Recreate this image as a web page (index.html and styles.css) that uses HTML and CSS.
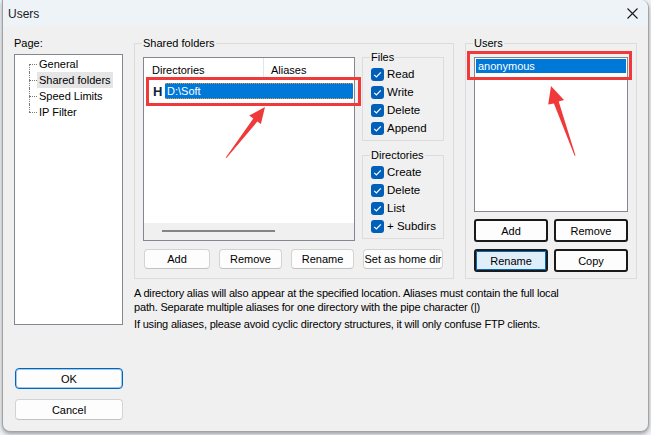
FILE: index.html
```html
<!DOCTYPE html>
<html>
<head>
<meta charset="utf-8">
<link rel="stylesheet" href="styles.css">
</head>
<body>
<div class="window">
  <div class="titlebar">
    <span class="title">Users</span>
    <svg class="close" width="11" height="11" viewBox="0 0 11 11"><path d="M0.5 0.5 L10.5 10.5 M10.5 0.5 L0.5 10.5" stroke="#1a1a1a" stroke-width="1.1" fill="none"/></svg>
  </div>
  <div class="client">
    <div class="left">
      <div class="page-label">Page:</div>
      <div class="tree">
        <div class="node first"><span class="twig"><i></i><i></i></span><span class="node-text">General</span></div>
        <div class="node"><span class="twig"><i></i><i></i></span><span class="node-text selected">Shared folders</span></div>
        <div class="node"><span class="twig"><i></i><i></i></span><span class="node-text">Speed Limits</span></div>
        <div class="node last"><span class="twig"><i></i><i></i></span><span class="node-text">IP Filter</span></div>
      </div>
      <div class="dlg-buttons">
        <button class="btn btn-ok">OK</button>
        <button class="btn btn-cancel">Cancel</button>
      </div>
    </div>
    <div class="main">
      <div class="groups">
        <fieldset class="group shared">
          <legend>Shared folders</legend>
          <div class="shared-body">
            <div class="listview">
              <div class="lv-header">
                <div class="lv-col col-dir">Directories</div>
                <div class="lv-col col-alias">Aliases</div>
              </div>
              <div class="lv-row"><span class="home-mark">H</span><span class="lv-sel">D:\Soft</span></div>
              <div class="lv-fill"></div>
              <div class="lv-hscroll"><div class="lv-thumb"></div></div>
            </div>
            <div class="perm-col">
              <fieldset class="subgroup files">
                <legend>Files</legend>
                <div class="check"><svg class="cb" width="13" height="13" viewBox="0 0 13 13"><rect x="0" y="0" width="13" height="13" rx="3" fill="#005fb8"/><path d="M3.2 6.9 L5.4 9 L9.8 4.3" stroke="#fff" stroke-width="1.2" fill="none"/></svg><span>Read</span></div>
                <div class="check"><svg class="cb" width="13" height="13" viewBox="0 0 13 13"><rect x="0" y="0" width="13" height="13" rx="3" fill="#005fb8"/><path d="M3.2 6.9 L5.4 9 L9.8 4.3" stroke="#fff" stroke-width="1.2" fill="none"/></svg><span>Write</span></div>
                <div class="check"><svg class="cb" width="13" height="13" viewBox="0 0 13 13"><rect x="0" y="0" width="13" height="13" rx="3" fill="#005fb8"/><path d="M3.2 6.9 L5.4 9 L9.8 4.3" stroke="#fff" stroke-width="1.2" fill="none"/></svg><span>Delete</span></div>
                <div class="check"><svg class="cb" width="13" height="13" viewBox="0 0 13 13"><rect x="0" y="0" width="13" height="13" rx="3" fill="#005fb8"/><path d="M3.2 6.9 L5.4 9 L9.8 4.3" stroke="#fff" stroke-width="1.2" fill="none"/></svg><span>Append</span></div>
              </fieldset>
              <fieldset class="subgroup dirs">
                <legend>Directories</legend>
                <div class="check"><svg class="cb" width="13" height="13" viewBox="0 0 13 13"><rect x="0" y="0" width="13" height="13" rx="3" fill="#005fb8"/><path d="M3.2 6.9 L5.4 9 L9.8 4.3" stroke="#fff" stroke-width="1.2" fill="none"/></svg><span>Create</span></div>
                <div class="check"><svg class="cb" width="13" height="13" viewBox="0 0 13 13"><rect x="0" y="0" width="13" height="13" rx="3" fill="#005fb8"/><path d="M3.2 6.9 L5.4 9 L9.8 4.3" stroke="#fff" stroke-width="1.2" fill="none"/></svg><span>Delete</span></div>
                <div class="check"><svg class="cb" width="13" height="13" viewBox="0 0 13 13"><rect x="0" y="0" width="13" height="13" rx="3" fill="#005fb8"/><path d="M3.2 6.9 L5.4 9 L9.8 4.3" stroke="#fff" stroke-width="1.2" fill="none"/></svg><span>List</span></div>
                <div class="check"><svg class="cb" width="13" height="13" viewBox="0 0 13 13"><rect x="0" y="0" width="13" height="13" rx="3" fill="#005fb8"/><path d="M3.2 6.9 L5.4 9 L9.8 4.3" stroke="#fff" stroke-width="1.2" fill="none"/></svg><span>+ Subdirs</span></div>
              </fieldset>
            </div>
          </div>
          <div class="shared-buttons">
            <button class="btn b-add">Add</button>
            <button class="btn b-remove">Remove</button>
            <button class="btn b-rename">Rename</button>
            <button class="btn b-home">Set as home dir</button>
          </div>
        </fieldset>
        <fieldset class="group users">
          <legend>Users</legend>
          <div class="listbox">
            <div class="lb-item">anonymous</div>
          </div>
          <div class="user-buttons">
            <button class="btn-dark">Add</button>
            <button class="btn-dark">Remove</button>
            <button class="btn-dark focused">Rename</button>
            <button class="btn-dark">Copy</button>
          </div>
        </fieldset>
      </div>
      <div class="help">
        <p>A directory alias will also appear at the specified location. Aliases must contain the full local<br>path. Separate multiple aliases for one directory with the pipe character (|)</p>
        <p>If using aliases, please avoid cyclic directory structures, it will only confuse FTP clients.</p>
      </div>
    </div>
  </div>
</div>
<svg class="annotations" width="651" height="435" viewBox="0 0 651 435">
  <rect x="147.5" y="78.5" width="212" height="26" fill="none" stroke="#f03a3a" stroke-width="3"/>
  <rect x="468.5" y="52.5" width="162" height="26" fill="none" stroke="#f03a3a" stroke-width="3"/>
  <polygon points="265,107 260.9,124 257.3,121.6 226.5,158 225.8,157.4 253.3,118.4 249.2,115.6" fill="#f03a3a"/>
  <polygon points="551,86 564,100 558.7,101.6 575.5,155.5 574.6,155.7 553.9,103.4 548.2,104.6" fill="#f03a3a"/>
</svg>
</body>
</html>
```
FILE: styles.css
```css
* { box-sizing: border-box; }
html, body {
  margin: 0;
  padding: 0;
}
body {
  width: 651px;
  height: 435px;
  overflow: hidden;
  background: #eef2f6;
  font-family: "Liberation Sans", Arial, sans-serif;
  font-size: 11px;
  color: #000;
  position: relative;
}
.window {
  margin-left: 2px;
  width: 647px;
  height: 432px;
  border: 1px solid #a3a3a3;
  border-top: none;
  border-radius: 0 8px 8px 8px;
  background: #f0f0f0;
  box-shadow: 0 2px 4px rgba(0,0,0,0.35);
  display: flex;
  flex-direction: column;
  overflow: hidden;
}
.titlebar {
  height: 26px;
  flex: none;
  background: #eef3f8;
  display: flex;
  align-items: center;
  justify-content: space-between;
  padding: 0 10px 0 5px;
}
.title {
  font-family: "Liberation Sans", Arial, sans-serif;
  font-size: 12px;
  color: #1a1a1a;
  padding-top: 1px;
}
.close { display: block; margin-top: 1px; }
.client {
  flex: 1;
  display: flex;
  padding: 10px 0 0 11px;
  column-gap: 11px;
}
.left {
  width: 109px;
  display: flex;
  flex-direction: column;
}
.page-label { line-height: 14px; }
.tree {
  margin-top: 4px;
  height: 271px;
  background: #fff;
  border: 1px solid #828790;
  padding: 1px 0 0 14px;
}
.node {
  display: flex;
  height: 16px;
  align-items: center;
}
.twig {
  width: 8px;
  height: 16px;
  display: flex;
  flex-direction: column;
}
.twig i {
  display: block;
  height: 8px;
  border-left: 1px dotted #7a7a7a;
}
.twig i:last-child {
  border-top: 1px dotted #7a7a7a;
}
.node.first .twig i:first-child { border-left: none; }
.node.last .twig i:last-child { border-left: none; }
.node-text {
  padding: 0 2px;
  line-height: 16px;
  height: 16px;
}
.node-text.selected { background: #e5e5e5; }
.dlg-buttons {
  margin-top: 43px;
  display: flex;
  flex-direction: column;
  row-gap: 10px;
  margin-left: 1px;
}
.btn {
  font-family: "Liberation Sans", Arial, sans-serif;
  font-size: 11px;
  color: #000;
  background: #fdfdfd;
  border: 1px solid #d3d3d3;
  border-bottom-color: #c2c2c2;
  border-radius: 4px;
  padding: 0;
  margin: 0;
  height: 21px;
}
.btn-ok {
  border: 1px solid #0067c0;
  box-shadow: inset 0 0 0 1px rgba(0,103,192,0.35);
}
.main {
  width: 503px;
  display: flex;
  flex-direction: column;
}
.groups {
  display: flex;
  column-gap: 11px;
}
fieldset { margin: 0; min-width: 0; }
legend {
  padding: 0 1px;
  margin-left: -1px;
  line-height: 14px;
}
.group {
  border: 1px solid #dcdcdc;
  padding: 0 8px 9px 8px;
}
.shared { width: 320px; }
.users { width: 172px; padding-bottom: 6px; }
.shared-body {
  display: grid;
  grid-template-columns: 212px 82px;
  column-gap: 7px;
  align-items: start;
}
.listview {
  margin-top: 7px;
  height: 184px;
  background: #fff;
  border: 1px solid #828790;
  display: flex;
  flex-direction: column;
}
.lv-header {
  display: flex;
  height: 24px;
}
.lv-col {
  line-height: 22px;
  padding-top: 1px;
}
.col-dir {
  width: 120px;
  padding-left: 8px;
  border-right: 1px solid #e5e5e5;
  height: 20px;
}
.col-alias { padding-left: 7px; }
.lv-row {
  display: flex;
  align-items: center;
  height: 18px;
  padding-left: 9px;
  padding-right: 1px;
}
.home-mark {
  font-weight: bold;
  font-size: 13px;
  color: #10243c;
  width: 12px;
}
.lv-sel {
  flex: 1;
  height: 16px;
  line-height: 14px;
  background: #0078d7;
  color: #fff;
  padding-left: 2px;
  border: 1px dotted #e49a3a;
  border-left-style: none;
  border-right-style: none;
}
.lv-fill { flex: 1; }
.lv-hscroll {
  height: 17px;
  background: #f0f0f0;
  padding: 7px 0 0 18px;
}
.lv-thumb {
  width: 113px;
  height: 2px;
  background: #858585;
}
.subgroup {
  width: 82px;
  border: 1px solid #dcdcdc;
  padding: 1px 0 3px 8px;
}
.dirs { margin-top: 7px; }
.check {
  display: flex;
  align-items: center;
  column-gap: 3px;
  height: 18px;
  font-size: 11.5px;
}
.cb { display: block; flex: none; }
.shared-buttons {
  margin-top: 8px;
  display: grid;
  grid-template-columns: 66px 63px 63px 80px;
  column-gap: 9px;
  padding-left: 1px;
}
.shared-buttons .btn { height: 20px; }
.listbox {
  margin-top: 7px;
  height: 155px;
  background: #fff;
  border: 1px solid #828790;
  padding: 1px;
}
.lb-item {
  height: 14px;
  line-height: 14px;
  background: #0078d7;
  color: #fff;
  padding-left: 2px;
  font-size: 11px;
}
.user-buttons {
  margin-top: 7px;
  display: grid;
  grid-template-columns: 74px 74px;
  column-gap: 6px;
  row-gap: 7px;
}
.btn-dark {
  height: 23px;
  font-family: "Liberation Sans", Arial, sans-serif;
  font-size: 11px;
  color: #000;
  background: #fdfdfd;
  border: 2px solid #1a1a1a;
  border-radius: 3px;
  padding: 0;
  margin: 0;
}
.btn-dark.focused {
  background: #e0eef9;
  box-shadow: inset 0 0 0 1px #0067c0;
}
.help {
  margin-top: 7px;
}
.help p {
  margin: 0;
  line-height: 14px;
  white-space: nowrap;
  letter-spacing: -0.18px;
}
.help p + p { margin-top: 3px; }
.annotations {
  position: absolute;
  left: 0;
  top: 0;
  pointer-events: none;
}
```
